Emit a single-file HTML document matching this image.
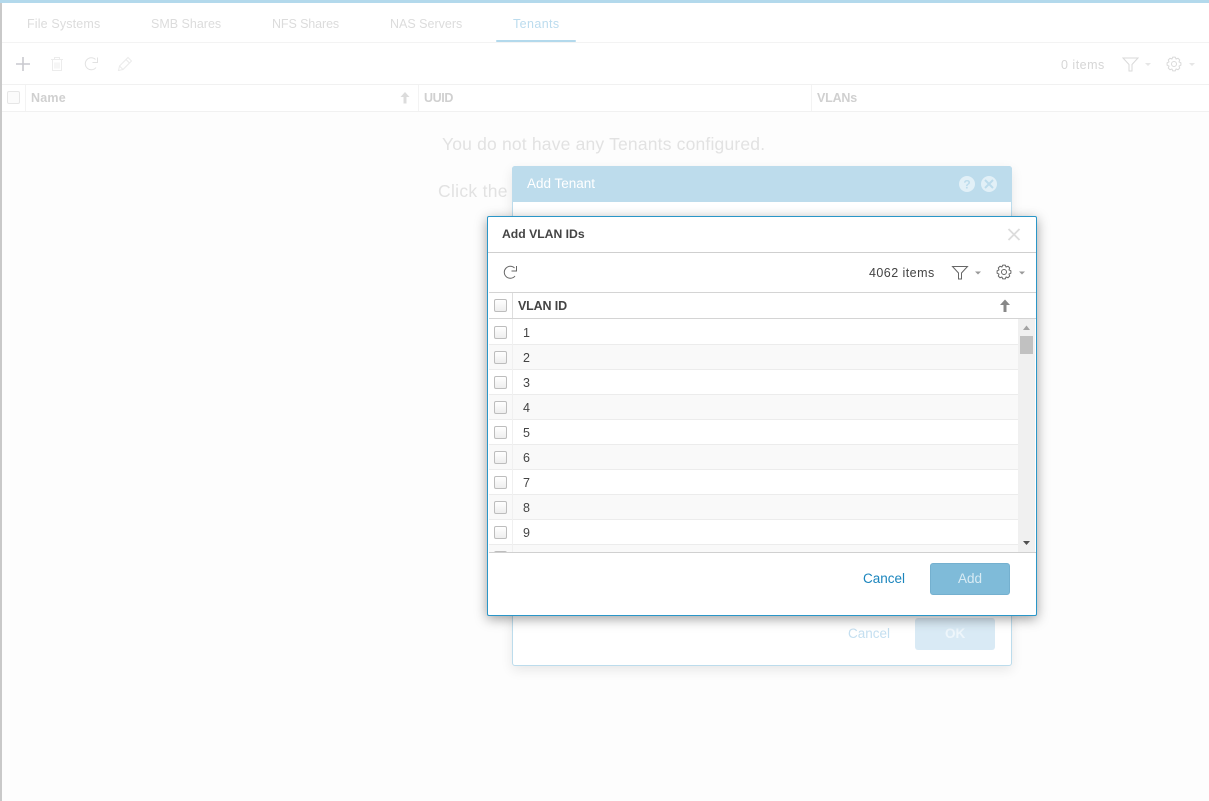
<!DOCTYPE html>
<html><head><meta charset="utf-8">
<style>
html,body{margin:0;padding:0;width:1209px;height:801px;overflow:hidden;background:#fdfdfd;font-family:"Liberation Sans",sans-serif;}
.a{position:absolute;white-space:nowrap}
.l{position:absolute}
.cb{position:absolute;width:11px;height:11px;border:1px solid #bdbdbd;border-radius:2px;background:linear-gradient(#fff,#eee)}
.cf{position:absolute;width:11px;height:11px;border:1px solid #e6e6e6;border-radius:2px;background:#fbfbfb}
svg{position:absolute;overflow:visible}
.row{position:absolute;left:489px;width:529px;height:24px;border-bottom:1px solid #ececec}
.rn{position:absolute;left:34px;top:6px;font-size:12.5px;color:#444}
</style></head><body>
<div class="l" style="left:0;top:0;width:1209px;height:43px;background:#fff"></div>
<div class="l" style="left:0;top:43px;width:1209px;height:69px;background:#fff"></div>
<div class="l" style="left:0;top:0;width:2px;height:801px;background:#c9c9c9"></div>
<div class="l" style="left:0;top:0;width:1209px;height:3px;background:#b3d9ec"></div>
<div class="l" style="left:2px;top:42px;width:1207px;height:1px;background:#f3f3f3"></div>
<div class="a" style="left:27px;top:17px;font-size:12.5px;letter-spacing:.15px;color:#dcdcdc">File Systems</div>
<div class="a" style="left:151px;top:17px;font-size:12.5px;color:#dcdcdc">SMB Shares</div>
<div class="a" style="left:272px;top:17px;font-size:12.5px;letter-spacing:-.1px;color:#dcdcdc">NFS Shares</div>
<div class="a" style="left:390px;top:17px;font-size:12.5px;color:#dcdcdc">NAS Servers</div>
<div class="a" style="left:513px;top:17px;font-size:12.5px;letter-spacing:.4px;color:#bcdcee">Tenants</div>
<div class="l" style="left:496px;top:40px;width:80px;height:2px;background:#b3d9ec;border-radius:1px"></div>

<svg style="left:0;top:0" width="200" height="84" fill="none">
<path d="M23 57V71M16 64H30" stroke="#c9c9cf" stroke-width="1.600"/>
<path d="M51 59.500H63M54.500 59V57.500H59.500V59M52.500 60V70.500H61.500V60M55 62.500V68.500M57 62.500V68.500M59 62.500V68.500" stroke="#ececec" stroke-width="1"/>
<path d="M96 67.500A6 6 0 1 1 95.500 59.500" stroke="#e2e2e2" stroke-width="1"/>
<path d="M97.500 57.500V62.500H92.500" stroke="#e2e2e2" stroke-width="1"/>
<path d="M118.500 70.500L119.500 66L128 57.500L131.500 61L123 69.500ZM126 59.500L129.500 63M119.500 66L123 69.500" stroke="#ebebeb" stroke-width="1"/>
</svg>
<div class="a" style="left:1061px;top:58px;font-size:12.5px;letter-spacing:.5px;color:#d6d6d6">0 items</div>
<svg style="left:0;top:0" width="1209" height="120" fill="none">
<path d="M1123 58H1138L1132 64.500V71H1129V64.500Z" stroke="#dadada" stroke-width="1"/>
<path d="M1145 63H1151L1148 66Z" fill="#e6e6e6"/>
<polygon transform="translate(1174 64)" stroke-linejoin="round" stroke="#dadada" points="6.89,-1.22 6.89,1.22 4.99,2.07 5.73,4.02 4.02,5.73 2.07,4.99 1.22,6.89 -1.22,6.89 -2.07,4.99 -4.02,5.73 -5.73,4.02 -4.99,2.07 -6.89,1.22 -6.89,-1.22 -4.99,-2.07 -5.73,-4.02 -4.02,-5.73 -2.07,-4.99 -1.22,-6.89 1.22,-6.89 2.07,-4.99 4.02,-5.73 5.73,-4.02 4.99,-2.07"/>
<circle cx="1174" cy="64" r="2.500" stroke="#dadada"/>
<path d="M1189 63H1195L1192 66Z" fill="#e6e6e6"/>
</svg>
<div class="l" style="left:2px;top:84px;width:1207px;height:1px;background:#f1f1f1"></div>
<div class="l" style="left:2px;top:111px;width:1207px;height:1px;background:#f1f1f1"></div>
<div class="l" style="left:25px;top:85px;width:1px;height:26px;background:#f3f3f3"></div>
<div class="l" style="left:418px;top:85px;width:1px;height:26px;background:#f3f3f3"></div>
<div class="l" style="left:811px;top:85px;width:1px;height:26px;background:#f3f3f3"></div>
<div class="cf" style="left:7px;top:91px"></div>
<div class="a" style="left:31px;top:91px;font-size:12.5px;font-weight:bold;letter-spacing:.2px;color:#d0d0d0">Name</div>
<div class="a" style="left:424px;top:91px;font-size:12.5px;font-weight:bold;letter-spacing:-.4px;color:#d0d0d0">UUID</div>
<div class="a" style="left:817px;top:91px;font-size:12.5px;font-weight:bold;letter-spacing:-.2px;color:#d0d0d0">VLANs</div>
<svg style="left:0;top:0" width="420" height="110"><path d="M405 92L409.500 97H406.500V103.500H403.500V97H400.500Z" fill="#dcdcdc"/></svg>

<div class="a" style="left:442px;top:134px;font-size:17.500px;letter-spacing:.18px;color:#e2e2e2">You do not have any Tenants configured.</div>
<div class="a" style="left:438px;top:181px;font-size:17.500px;letter-spacing:.3px;color:#e2e2e2">Click the</div>

<!-- Add Tenant dialog -->
<div class="l" style="left:512px;top:166px;width:498px;height:498px;background:#fff;border:1px solid #bcdcec;border-radius:3px;box-shadow:0 4px 12px rgba(0,0,0,.09)"></div>
<div class="l" style="left:512px;top:166px;width:500px;height:36px;background:#bddcec;border-radius:3px 3px 0 0"></div>
<div class="a" style="left:527px;top:176px;font-size:13.500px;color:#fff">Add Tenant</div>
<svg style="left:0;top:0" width="1020" height="200" fill="none">
<circle cx="967" cy="184" r="8" fill="#e2f0f7"/>
<circle cx="989" cy="184" r="8" fill="#e2f0f7"/>
<path d="M985 180L993 188M993 180L985 188" stroke="#bddcec" stroke-width="2"/>
<text x="967" y="188.500" text-anchor="middle" font-family="Liberation Sans" font-size="12" font-weight="bold" fill="#bddcec">?</text>
</svg>
<div class="a" style="left:848px;top:626px;font-size:13.500px;color:#c4dff0">Cancel</div>
<div class="l" style="left:915px;top:618px;width:80px;height:32px;background:#d9eaf5;border-radius:3px"></div>
<div class="a" style="left:945px;top:626px;font-size:13.500px;font-weight:bold;color:#eef6fb">OK</div>

<!-- Add VLAN IDs dialog -->
<div class="l" style="left:487px;top:216px;width:548px;height:398px;background:#fff;border:1px solid #2a96c8;border-radius:2px;box-shadow:0 3px 12px rgba(0,0,0,.38)"></div>
<div class="a" style="left:502px;top:227px;font-size:12.2px;font-weight:bold;color:#444">Add VLAN IDs</div>
<svg style="left:0;top:0" width="1040" height="300" fill="none">
<path d="M1008.500 229L1019.500 240M1019.500 229L1008.500 240" stroke="#dcdcdc" stroke-width="1.800"/>
<path d="M515 276A6 6 0 1 1 514.500 268" stroke="#666" stroke-width="1"/>
<path d="M516.500 266V271H511.500" stroke="#666" stroke-width="1"/>
<path d="M952.500 266.500H967.500L961.500 273V279H958.500V273Z" stroke="#666" stroke-width="1"/>
<path d="M975 271.500H981L978 274.500Z" fill="#999"/>
<polygon transform="translate(1004 272)" stroke-linejoin="round" stroke="#666" points="6.89,-1.22 6.89,1.22 4.99,2.07 5.73,4.02 4.02,5.73 2.07,4.99 1.22,6.89 -1.22,6.89 -2.07,4.99 -4.02,5.73 -5.73,4.02 -4.99,2.07 -6.89,1.22 -6.89,-1.22 -4.99,-2.07 -5.73,-4.02 -4.02,-5.73 -2.07,-4.99 -1.22,-6.89 1.22,-6.89 2.07,-4.99 4.02,-5.73 5.73,-4.02 4.99,-2.07"/>
<circle cx="1004" cy="272" r="2.500" stroke="#666"/>
<path d="M1019 271.500H1025L1022 274.500Z" fill="#999"/>
<path d="M1005 299.500L1010 305H1006.500V312H1003.500V305H1000Z" fill="#888"/>
</svg>
<div class="l" style="left:488px;top:252px;width:548px;height:1px;background:#cfcfcf"></div>
<div class="a" style="left:869px;top:266px;font-size:12.5px;letter-spacing:.45px;color:#444">4062 items</div>
<div class="l" style="left:489px;top:292px;width:547px;height:1px;background:#d4d4d4"></div>
<div class="l" style="left:489px;top:318px;width:547px;height:1px;background:#d4d4d4"></div>
<div class="l" style="left:512px;top:293px;width:1px;height:25px;background:#dedede"></div>
<div class="cb" style="left:494px;top:299px"></div>
<div class="a" style="left:518px;top:299px;font-size:12.5px;font-weight:bold;letter-spacing:-.15px;color:#444">VLAN ID</div>

<div class="l" style="left:489px;top:319px;width:529px;height:233px;overflow:hidden;background:#fff">
<div class="row" style="left:0;top:0;background:#fff;height:25px"><div class="cb" style="left:5px;top:7px"></div><div class="rn" style="top:7px">1</div></div>
<div class="row" style="left:0;top:26px;background:#f9f9f9"><div class="cb" style="left:5px;top:6px"></div><div class="rn">2</div></div>
<div class="row" style="left:0;top:51px;background:#fff"><div class="cb" style="left:5px;top:6px"></div><div class="rn">3</div></div>
<div class="row" style="left:0;top:76px;background:#f9f9f9"><div class="cb" style="left:5px;top:6px"></div><div class="rn">4</div></div>
<div class="row" style="left:0;top:101px;background:#fff"><div class="cb" style="left:5px;top:6px"></div><div class="rn">5</div></div>
<div class="row" style="left:0;top:126px;background:#f9f9f9"><div class="cb" style="left:5px;top:6px"></div><div class="rn">6</div></div>
<div class="row" style="left:0;top:151px;background:#fff"><div class="cb" style="left:5px;top:6px"></div><div class="rn">7</div></div>
<div class="row" style="left:0;top:176px;background:#f9f9f9"><div class="cb" style="left:5px;top:6px"></div><div class="rn">8</div></div>
<div class="row" style="left:0;top:201px;background:#fff"><div class="cb" style="left:5px;top:6px"></div><div class="rn">9</div></div>
<div class="row" style="left:0;top:226px;background:#f9f9f9;border:0"><div class="cb" style="left:5px;top:6px"></div></div>
<div class="l" style="left:23px;top:0;width:1px;height:233px;background:#f0f0f0"></div>
</div>

<div class="l" style="left:1018px;top:319px;width:17px;height:233px;background:#f0f0f0"></div>
<div class="l" style="left:1020px;top:336px;width:13px;height:18px;background:#c1c1c1"></div>
<svg style="left:0;top:0" width="1040" height="560">
<path d="M1023 330H1030L1026.500 325.500Z" fill="#a3a3a3"/>
<path d="M1023 541H1030L1026.500 545Z" fill="#505050"/>
</svg>
<div class="l" style="left:489px;top:552px;width:547px;height:1px;background:#d0d0d0"></div>

<div class="a" style="left:863px;top:571px;font-size:13.500px;color:#1b85bd">Cancel</div>
<div class="l" style="left:930px;top:563px;width:78px;height:30px;background:#7fbbd9;border:1px solid #74b0cf;border-radius:3px"></div>
<div class="a" style="left:958px;top:571px;font-size:13.500px;color:#d8ebf4">Add</div>
</body></html>
